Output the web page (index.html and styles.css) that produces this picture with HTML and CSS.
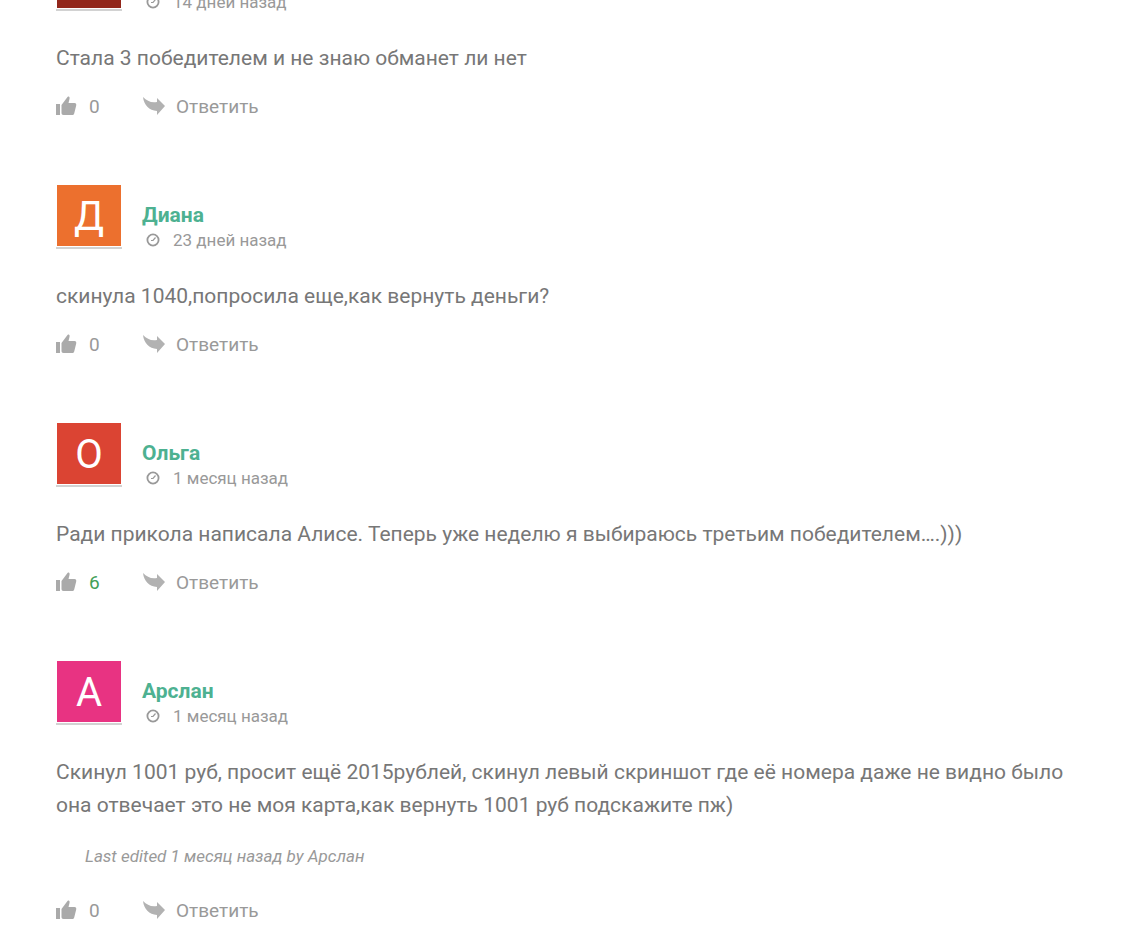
FILE: index.html
```html
<!DOCTYPE html>
<html lang="ru">
<head>
  <meta charset="UTF-8">
  <meta name="viewport" content="width=device-width, initial-scale=1.0">
  <title>Комментарии</title>
  <link rel="stylesheet" href="styles.css">
</head>
<body>
  <!-- shared icons -->
  <svg class="sprite" aria-hidden="true">
    <symbol id="icon-like" viewBox="0 0 21 20">
      <path d="M0 8h4v11H0zM5.500 9l6-8c1.500-1 2.500 0 2 2l-1 4h6c1.500 0 2 1 1.700 2.500l-2 8c-.4 1-1 1.500-2 1.500H7.500c-1.300 0-2-.7-2-2z"/>
    </symbol>
    <symbol id="icon-reply" viewBox="0 0 22 18">
      <path d="M0 0c4 4 8 6 14 5V1l8 8-8 9v-4C6 13.500 1 8 0 0z"/>
    </symbol>
    <symbol id="icon-clock" viewBox="0 0 14 14">
      <circle cx="7" cy="7" r="5.600" fill="none" stroke="currentColor" stroke-width="1.800"/>
      <path d="M9.500 4.500L7 7.500H5" fill="none" stroke="currentColor" stroke-width="1.200"/>
    </symbol>
  </svg>

  <main class="comments">
    <article class="comment">
      <header class="comment-header">
        <div class="avatar brown"></div>
        <div class="comment-info">
          <div class="date"><svg class="clock"><use href="#icon-clock"/></svg>14 дней назад</div>
        </div>
      </header>
      <p class="comment-text">Стала 3 победителем и не знаю обманет ли нет</p>
      <footer class="actions">
        <button class="like" type="button" aria-label="Нравится"><svg class="thumb"><use href="#icon-like"/></svg></button>
        <span class="votes">0</span>
        <button class="reply" type="button"><svg class="arrow"><use href="#icon-reply"/></svg>Ответить</button>
      </footer>
    </article>

    <article class="comment">
      <header class="comment-header">
        <div class="avatar orange">Д</div>
        <div class="comment-info">
          <div class="author">Диана</div>
          <div class="date"><svg class="clock"><use href="#icon-clock"/></svg>23 дней назад</div>
        </div>
      </header>
      <p class="comment-text">скинула 1040,попросила еще,как вернуть деньги?</p>
      <footer class="actions">
        <button class="like" type="button" aria-label="Нравится"><svg class="thumb"><use href="#icon-like"/></svg></button>
        <span class="votes">0</span>
        <button class="reply" type="button"><svg class="arrow"><use href="#icon-reply"/></svg>Ответить</button>
      </footer>
    </article>

    <article class="comment">
      <header class="comment-header">
        <div class="avatar red">О</div>
        <div class="comment-info">
          <div class="author">Ольга</div>
          <div class="date"><svg class="clock"><use href="#icon-clock"/></svg>1 месяц назад</div>
        </div>
      </header>
      <p class="comment-text">Ради прикола написала Алисе. Теперь уже неделю я выбираюсь третьим победителем….)))</p>
      <footer class="actions">
        <button class="like" type="button" aria-label="Нравится"><svg class="thumb"><use href="#icon-like"/></svg></button>
        <span class="votes positive">6</span>
        <button class="reply" type="button"><svg class="arrow"><use href="#icon-reply"/></svg>Ответить</button>
      </footer>
    </article>

    <article class="comment">
      <header class="comment-header">
        <div class="avatar pink">А</div>
        <div class="comment-info">
          <div class="author">Арслан</div>
          <div class="date"><svg class="clock"><use href="#icon-clock"/></svg>1 месяц назад</div>
        </div>
      </header>
      <p class="comment-text">Скинул 1001 руб, просит ещё 2015рублей, скинул левый скриншот где её номера даже не видно было она отвечает это не моя карта,как вернуть 1001 руб подскажите пж)</p>
      <p class="edited">Last edited 1 месяц назад by Арслан</p>
      <footer class="actions">
        <button class="like" type="button" aria-label="Нравится"><svg class="thumb"><use href="#icon-like"/></svg></button>
        <span class="votes">0</span>
        <button class="reply" type="button"><svg class="arrow"><use href="#icon-reply"/></svg>Ответить</button>
      </footer>
    </article>
  </main>
</body>
</html>
```
FILE: styles.css
```css
* {
  margin: 0;
  padding: 0;
  box-sizing: border-box;
}

body {
  font-family: Roboto, "Noto Sans", sans-serif;
  background-color: #fff;
  color: #777;
}

.sprite {
  display: none;
}

.comments {
  /* list is scrolled part way into the first comment */
  margin-top: -53px;
  padding: 0 56px;
}

.comment {
  margin-bottom: 67px;
}

.comment:last-child {
  margin-bottom: 0;
}

.comment-header {
  display: flex;
  gap: 20px;
  height: 64px;
}

.avatar {
  width: 66px;
  height: 64px;
  padding: 0 1px 1px;
  border-bottom: 2px solid #d2d2d2;
  background-clip: content-box;
  color: #fff;
  font-size: 40px;
  line-height: 63px;
  text-align: center;
}

.brown {
  background-color: #92271b;
}

.orange {
  background-color: #ec702e;
}

.red {
  background-color: #db4433;
}

.pink {
  background-color: #e83382;
}

.comment-info {
  display: flex;
  flex-direction: column;
  justify-content: flex-end;
}

.author {
  color: #4db191;
  font-size: 21px;
  font-weight: bold;
  line-height: 32px;
}

.date {
  display: flex;
  align-items: center;
  color: #999;
  font-size: 17px;
  line-height: 18px;
}

.clock {
  width: 14px;
  height: 14px;
  margin: 0 13px 0 4px;
}

.comment-text {
  margin-top: 31px;
  font-size: 21px;
  line-height: 33px;
}

.edited {
  margin: 24px 0 32px 29px;
  color: #999;
  font-size: 17px;
  font-style: italic;
  line-height: 20px;
}

.actions {
  display: flex;
  align-items: center;
  height: 24px;
  margin-top: 19px;
  color: #999;
  font-size: 19px;
}

.like,
.reply {
  display: flex;
  align-items: center;
  border: none;
  background: none;
  color: inherit;
  font: inherit;
  cursor: pointer;
}

.votes {
  width: 54px;
  margin-left: 12px;
}

.positive {
  color: #43a057;
}

.thumb {
  width: 21px;
  height: 20px;
  fill: #aaa;
}

.arrow {
  width: 22px;
  height: 18px;
  margin-right: 11px;
  fill: #b2b2b2;
}
```
